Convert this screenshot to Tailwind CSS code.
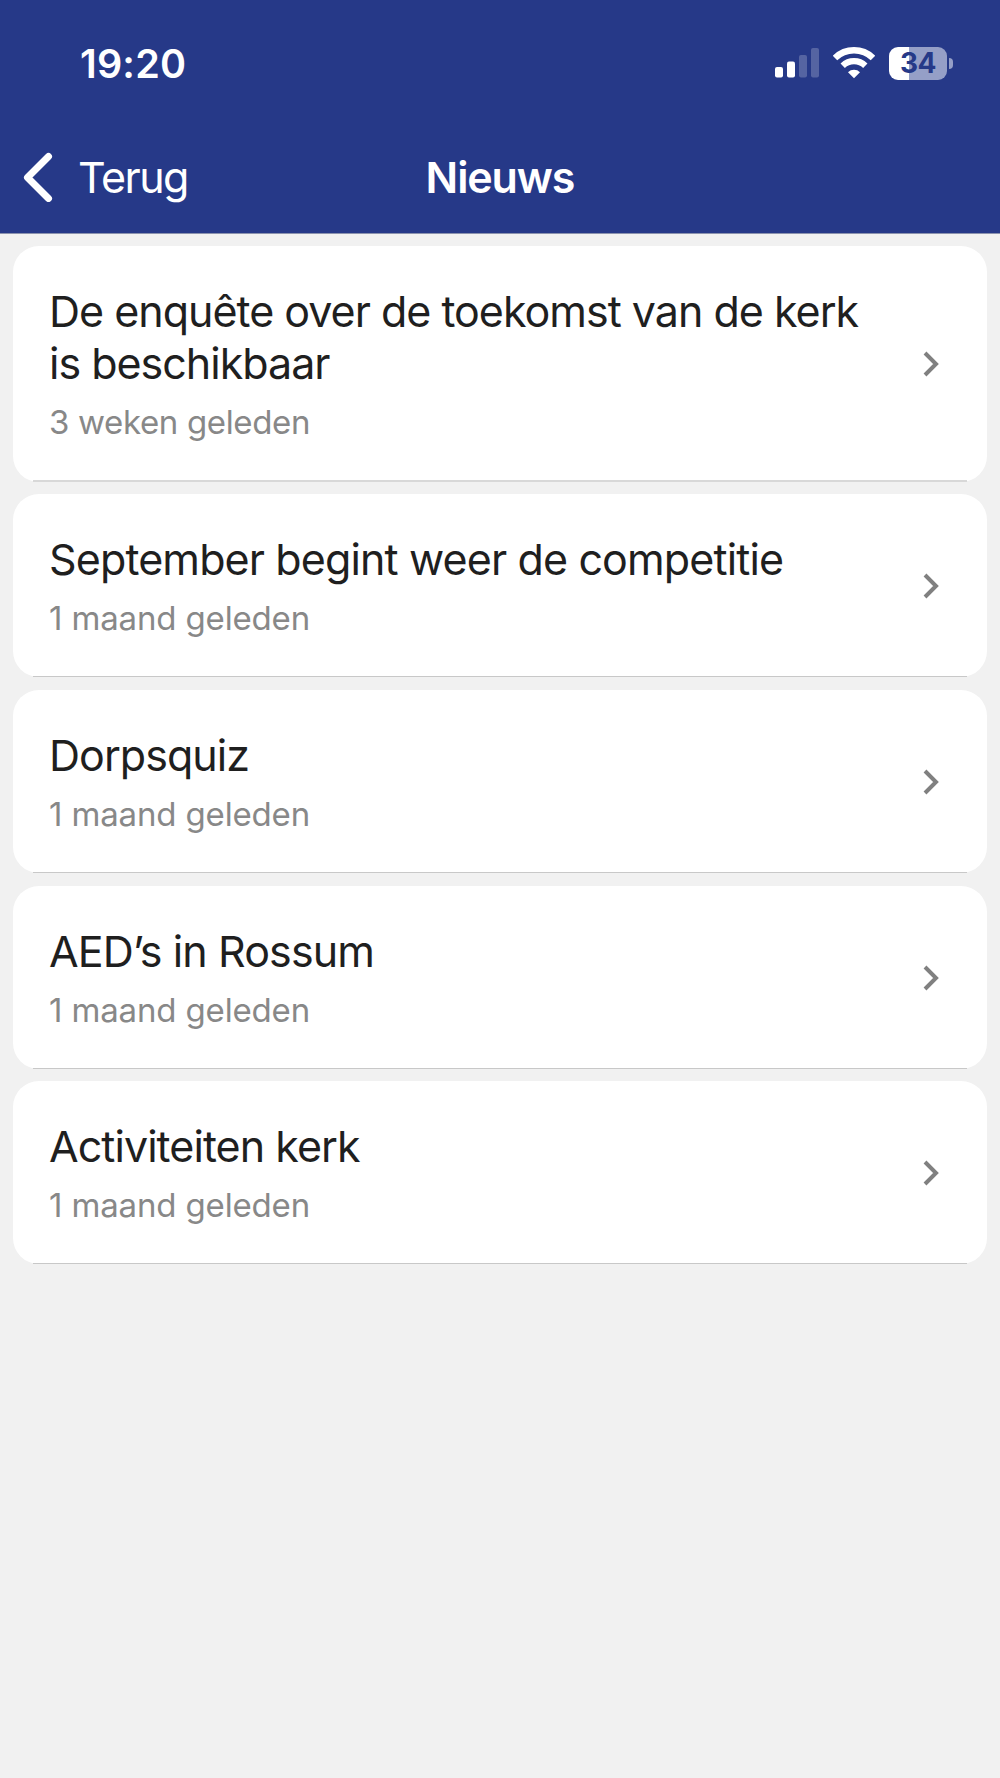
<!DOCTYPE html>
<html lang="nl">

<head>
  <meta charset="UTF-8">
  <meta name="viewport" content="width=device-width, initial-scale=1.0">
  <title>Nieuws</title>
  <script src="https://cdn.jsdelivr.net/npm/@tailwindcss/browser@4"></script>
</head>

<body class="bg-[#f1f1f1] font-['Inter',sans-serif]">
  <div class="w-[1000px] min-h-[1778px] bg-[#f1f1f1]">
    <header class="h-[234px] bg-[#263988] border-b border-[#8c93ae] text-white">
      <!-- Status bar -->
      <div class="h-[126px] flex items-center justify-between pl-20 pr-[47px]">
        <span class="pt-[3px] text-[39.5px] leading-none font-semibold tracking-[0.2px]">19:20</span>
        <div class="flex items-center gap-[14px]">
          <svg class="w-[44px] h-[34px]" viewBox="0 0 44 34" fill="#fff">
            <rect x="0" y="21" width="8" height="10.5" rx="2" />
            <rect x="12" y="15.5" width="8" height="16" rx="2" />
            <rect x="24" y="9" width="8" height="22.5" rx="2" fill-opacity=".22" />
            <rect x="36" y="2" width="8" height="29.5" rx="2" fill-opacity=".22" />
          </svg>
          <svg class="w-[42px] h-[34px]" viewBox="0 0 42 34" fill="none" stroke="#fff">
            <path d="M2 12a27.3 27.3 0 0 1 38 0" stroke-width="6.5" />
            <path d="M9.7 19.7a16.4 16.4 0 0 1 22.6 0" stroke-width="6.3" />
            <path d="M21 32.2l-6-6a8.6 8.6 0 0 1 12 0z" fill="#fff" stroke="none" />
          </svg>
          <div class="flex items-center gap-[2px]">
            <div class="w-[58px] h-[33px] rounded-[9px] bg-linear-to-r from-white from-34% to-[#959fc7] to-34% flex items-center justify-center">
              <span class="text-[28px] leading-none font-bold tracking-[-0.5px] text-[#263988]">34</span>
            </div>
            <div class="w-1 h-[11px] rounded-r-full bg-[#959fc7]"></div>
          </div>
        </div>
      </div>

      <!-- Navigation bar -->
      <div class="h-[107px] grid grid-cols-3 items-start pt-[25px] text-[43px] leading-[52px]">
        <a class="flex items-center pl-[23px] tracking-[-1.5px]">
          <svg class="w-[30px] h-[50px] mr-[25px]" viewBox="0 0 30 50" fill="none" stroke="#fff" stroke-width="7" stroke-linecap="round" stroke-linejoin="round">
            <path d="M25.5 4.5L4.5 25.5L25.5 46.5" />
          </svg>
          Terug
        </a>
        <h1 class="text-center font-semibold tracking-[-1.1px]">Nieuws</h1>
      </div>
    </header>

    <main class="px-[13px] pt-3 flex flex-col gap-3">
      <article class="h-[236px] bg-white rounded-[26px] pt-[39px] pl-9 pr-12 flex relative">
        <div class="w-[840px]">
          <h2 class="text-[43px] leading-[52px] tracking-[-1px] text-[#1f1f1f]">De enquête over de toekomst van de kerk<br>is beschikbaar</h2>
          <p class="mt-[13px] text-[33px] leading-10 tracking-[-0.35px] text-[#888]">3 weken geleden</p>
        </div>
        <svg class="w-4 h-[26px] shrink-0 ml-auto mt-[66px]" viewBox="0 0 16 26" fill="none" stroke="#808080" stroke-width="4"><path d="M2 2L13 13L2 24" /></svg>
        <div class="absolute bottom-0 inset-x-5 h-[2px] bg-[#d8d8d8]"></div>
      </article>
      <article class="h-[183px] bg-white rounded-[26px] pt-[39px] pl-9 pr-12 flex relative">
        <div class="w-[840px]">
          <h2 class="text-[43px] leading-[52px] tracking-[-0.87px] text-[#1f1f1f]">September begint weer de competitie</h2>
          <p class="mt-[13px] text-[33px] leading-10 tracking-[-0.15px] text-[#888]">1 maand geleden</p>
        </div>
        <svg class="w-4 h-[26px] shrink-0 ml-auto mt-10" viewBox="0 0 16 26" fill="none" stroke="#808080" stroke-width="4"><path d="M2 2L13 13L2 24" /></svg>
        <div class="absolute bottom-0 inset-x-5 h-px bg-[#c8c8c8]"></div>
      </article>
      <article class="mt-px h-[183px] bg-white rounded-[26px] pt-[39px] pl-9 pr-12 flex relative">
        <div class="w-[840px]">
          <h2 class="text-[43px] leading-[52px] tracking-[-0.95px] text-[#1f1f1f]">Dorpsquiz</h2>
          <p class="mt-[13px] text-[33px] leading-10 tracking-[-0.15px] text-[#888]">1 maand geleden</p>
        </div>
        <svg class="w-4 h-[26px] shrink-0 ml-auto mt-10" viewBox="0 0 16 26" fill="none" stroke="#808080" stroke-width="4"><path d="M2 2L13 13L2 24" /></svg>
        <div class="absolute bottom-0 inset-x-5 h-px bg-[#c8c8c8]"></div>
      </article>
      <article class="mt-px h-[183px] bg-white rounded-[26px] pt-[39px] pl-9 pr-12 flex relative">
        <div class="w-[840px]">
          <h2 class="text-[43px] leading-[52px] tracking-[-0.9px] text-[#1f1f1f]">AED’s in Rossum</h2>
          <p class="mt-[13px] text-[33px] leading-10 tracking-[-0.15px] text-[#888]">1 maand geleden</p>
        </div>
        <svg class="w-4 h-[26px] shrink-0 ml-auto mt-10" viewBox="0 0 16 26" fill="none" stroke="#808080" stroke-width="4"><path d="M2 2L13 13L2 24" /></svg>
        <div class="absolute bottom-0 inset-x-5 h-px bg-[#c8c8c8]"></div>
      </article>
      <article class="h-[183px] bg-white rounded-[26px] pt-[39px] pl-9 pr-12 flex relative">
        <div class="w-[840px]">
          <h2 class="text-[43px] leading-[52px] tracking-[-0.95px] text-[#1f1f1f]">Activiteiten kerk</h2>
          <p class="mt-[13px] text-[33px] leading-10 tracking-[-0.15px] text-[#888]">1 maand geleden</p>
        </div>
        <svg class="w-4 h-[26px] shrink-0 ml-auto mt-10" viewBox="0 0 16 26" fill="none" stroke="#808080" stroke-width="4"><path d="M2 2L13 13L2 24" /></svg>
        <div class="absolute bottom-0 inset-x-5 h-px bg-[#c8c8c8]"></div>
      </article>
    </main>
  </div>
</body>

</html>
